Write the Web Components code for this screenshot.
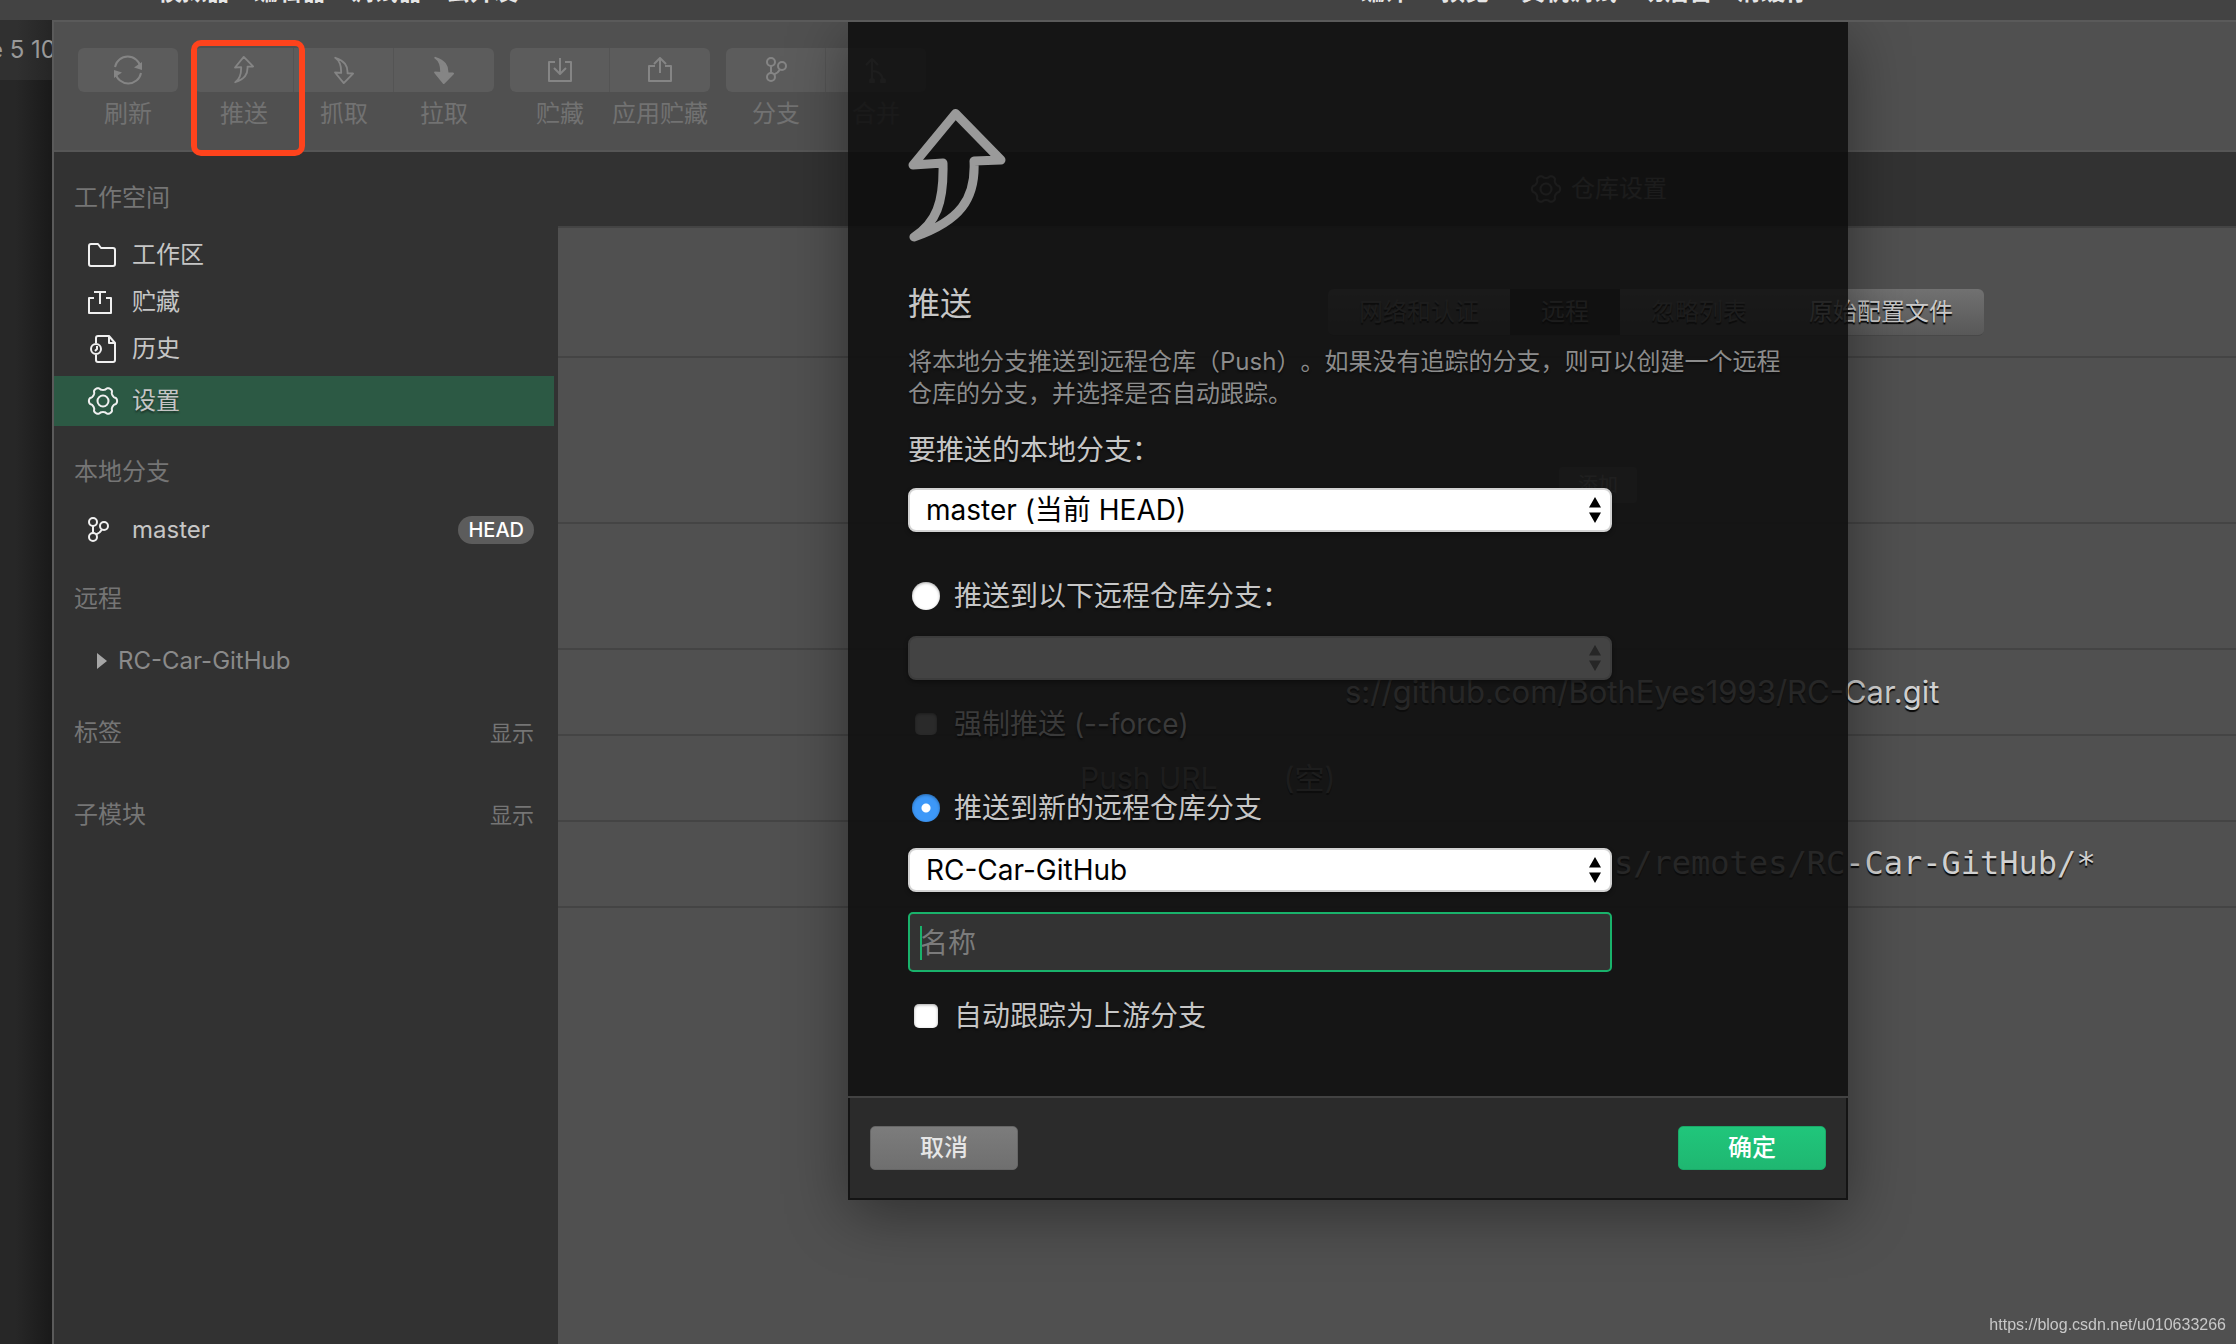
<!DOCTYPE html>
<html lang="zh-CN">
<head>
<meta charset="utf-8">
<title>推送</title>
<style>
  html, body { height: 100%; }
  body {
    margin: 0; overflow: hidden; background: #222;
    font-family: Inter, "Noto Sans CJK SC", sans-serif; font-size: 24px; line-height: 32px;
    color: #c6c6c6; text-spacing-trim: space-all;
  }
</style>
</head>
<body>
<git-app></git-app>

<script>
const define = (name, css, html, setup) => {
  const tpl = document.createElement('template');
  tpl.innerHTML = `<style>*{box-sizing:border-box}${css}</style>${html}`;
  customElements.define(name, class extends HTMLElement {
    constructor() {
      super();
      this.attachShadow({ mode: 'open' }).append(tpl.content.cloneNode(true));
    }
    connectedCallback() { if (setup) setup(this, this.shadowRoot); }
  });
};

/* Six-lobed gear outline around a centre point */
const gear = (c, r, a) => {
  let d = '';
  for (let i = 0; i < 120; i++) {
    const t = i * Math.PI / 60, w = Math.cos(6 * t);
    const k = r + a * Math.sign(w) * Math.sqrt(Math.abs(w));
    d += (i ? 'L' : 'M') + (c + k * Math.cos(t)).toFixed(2) + ' ' + (c + k * Math.sin(t)).toFixed(2);
  }
  return d + 'Z';
};
const ARROW = 'M47.5 4.5L93 51L66 52C68 90 52 112 6 128C28 114 36 94 35 54L5 56Z';
const BRANCH = '<circle cx="6" cy="5" r="4"/><circle cx="6" cy="20" r="4"/><circle cx="17" cy="9" r="4"/><path d="M6 9V16M15 12.500Q13 16 9 17.500"/>';
const ICONS = {
  refresh: [30, 30, '<path d="M2 12A13 13 0 0 1 27.500 12M28 18A13 13 0 0 1 2.500 18"/><path d="M29 7V15L21 12.500ZM1 23V15L9 17.500Z" fill="currentColor" stroke="none"/>'],
  push: [20, 28, `<g transform="scale(.205)" stroke-width="9"><path d="${ARROW}"/></g>`],
  fetch: [20, 28, `<g transform="matrix(.205 0 0 -.205 0 28)" stroke-width="9"><path d="${ARROW}"/></g>`],
  pull: [20, 28, `<g transform="matrix(.205 0 0 -.205 0 28)" stroke-width="9"><path d="${ARROW}" fill="currentColor"/></g>`],
  stash: [26, 26, '<path d="M8 5H2V24H24V5H18M13 1V17M7 11L13 17L19 11"/>'],
  apply: [26, 26, '<path d="M8 9H2V24H24V9H18M13 16V1M7 7L13 1L19 7"/>'],
  branch: [22, 26, BRANCH],
  merge: [22, 26, '<path d="M7 24V2M1 8L7 2L13 8M7 14Q17 14 18 24"/><circle cx="7" cy="24" r="2" fill="currentColor"/><circle cx="18" cy="24" r="2" fill="currentColor"/>'],
  folder: [30, 26, '<path d="M2 4Q2 2 4 2H11L14 6H26Q28 6 28 8V22Q28 24 26 24H4Q2 24 2 22Z"/>'],
  tray: [26, 26, '<path d="M7 9H2V24H24V9H19M7 3H19M13 3V15"/>'],
  history: [30, 30, '<path d="M9 9V4Q9 2 11 2H22L28 9V26Q28 28 26 28H11Q9 28 9 26V21M22 2V9H28"/><circle cx="9" cy="15" r="5"/><path d="M10 12V15L8 17"/>'],
  gear: [32, 32, `<path d="${gear(16, 12.6, 1.5)}"/><circle cx="16" cy="16" r="5.500"/>`],
  arrow: [98, 133, `<path d="${ARROW}" stroke-width="9"/>`],
  updown: [12, 26, '<path d="M6 0L12 10.500H0ZM0 15.500H12L6 26Z" fill="currentColor" stroke="none"/>'],
  right: [10, 16, '<path d="M0 0L10 8L0 16Z" fill="currentColor" stroke="none"/>']
};
const drawIcon = name => {
  const [w, h, body] = ICONS[name];
  return `<svg width="${w}" height="${h}" viewBox="0 0 ${w} ${h}" fill="none" stroke="currentColor" stroke-width="2" stroke-linejoin="round" aria-hidden="true">${body}</svg>`;
};
define('g-icon', ':host{display:inline-flex;flex:none}svg{display:block}', '<span></span>', (el, root) => {
  const name = el.getAttribute('name');
  if (name) root.querySelector('span').innerHTML = drawIcon(name);
});
/* Puts the icon named by the host's icon attribute into its [data-icon] holder */
const fillIcon = (el, root) => {
  root.querySelector('[data-icon]').innerHTML = `<g-icon name="${el.getAttribute('icon')}"></g-icon>`;
};

define('menu-strip', `
  :host{display:block;height:20px;overflow:hidden;background:#434343;color:#e6e6e6;font-weight:600}
  nav{display:flex;gap:24px;margin-top:-20px;padding-left:158px;line-height:24px}
  .pair{display:flex;gap:32px}
  .tools{display:flex;gap:24px;margin-left:819px}`, `
  <nav><span>模拟器</span><span>编辑器</span><span>调试器</span><span>云开发</span>
  <div class="tools"><div class="pair"><span>编译</span><span>预览</span><span>真机调试</span></div><span>切后台</span><span>清缓存</span></div></nav>`);

define('device-strip', `
  :host{display:flex;flex-direction:column;flex:none;width:52px;overflow:hidden;background:linear-gradient(90deg,#272727 30%,#191919)}
  div{display:flex;justify-content:flex-end;align-items:center;height:60px;margin-right:-4px;background:linear-gradient(90deg,#303030 30%,#242424);color:#999;white-space:nowrap}`,
  '<div>e 5 10</div>');

define('tool-button', `
  :host{display:block;width:100px}
  button{display:block;width:100%;padding:0;border:0;background:none;font:inherit;color:#727272;white-space:nowrap;text-align:center}
  .face{display:flex;align-items:center;justify-content:center;height:44px;background:#5c5c5c;color:#858585;margin-bottom:6px}
  :host([first]) .face{border-radius:6px 0 0 6px}
  :host([last]) .face{border-radius:0 6px 6px 0}
  :host([first][last]) .face{border-radius:6px}
  :host(:not([last])) .face{box-shadow:inset -1px 0 #545454}
  :host([marked]){position:relative;z-index:2}
  :host([marked])::after{content:"";position:absolute;inset:-8px -11px -26px -3px;border:6px solid #ff431c;border-radius:10px}`, `
  <button type="button"><span class="face" data-icon></span><slot></slot></button>`, fillIcon);

define('tool-group', ':host{display:flex;align-items:flex-start}', '<slot></slot>');

define('git-toolbar', `
  :host{display:flex;gap:16px;height:130px;padding:26px 24px 0;background:#505050;border-bottom:2px solid #565656}`, `
  <tool-group><tool-button icon="refresh" first last>刷新</tool-button></tool-group>
  <tool-group><tool-button icon="push" first marked>推送</tool-button><tool-button icon="fetch">抓取</tool-button><tool-button icon="pull" last>拉取</tool-button></tool-group>
  <tool-group><tool-button icon="stash" first>贮藏</tool-button><tool-button icon="apply" last>应用贮藏</tool-button></tool-group>
  <tool-group><tool-button icon="branch" first>分支</tool-button><tool-button icon="merge" last>合并</tool-button></tool-group>`);

define('nav-item', `
  :host{display:block;height:47px}
  a{display:grid;grid-template-columns:45px 1fr auto;align-items:center;height:100%;padding:0 24px 0 33px;color:#c6c6c6;text-decoration:none}
  [data-icon]{display:flex;color:#f0f0f0}
  :host([selected]){height:50px;margin:4px 4px 0 0;background:#2c5944}
  :host([selected]) a{text-shadow:0 2px 2px rgba(0,0,0,.4)}
  :host([child]) a{grid-template-columns:21px 1fr;padding-left:43px;color:#8a8a8a}
  :host([child]) [data-icon]{color:#a6a6a6}
  ::slotted(b){padding:0 10px;border-radius:14px;background:#5c5c5c;color:#fff;font-size:20px;font-weight:500;line-height:28px}`, `
  <a href="#"><span data-icon></span><span><slot></slot></span><slot name="badge"></slot></a>`, fillIcon);

define('nav-head', `
  :host{display:flex;justify-content:space-between;align-items:center;color:#757575}
  ::slotted(button){padding:0;border:0;background:none;font:inherit;font-size:22px;color:#757575}`,
  '<slot></slot>');

define('side-nav', `
  :host{display:flex;flex-direction:column;flex:none;width:504px;padding-top:30px;background:#323232}
  nav{display:flex;flex-direction:column}
  nav-head{padding:0 24px 0 20px}
  nav-head button{padding:0;border:0;background:none;font:inherit;font-size:22px;color:#757575}
  .a{padding-top:17px}
  .b{padding-top:30px;padding-bottom:18px}
  .c{padding-top:30px;padding-bottom:22px}
  .d{padding-top:33px;padding-bottom:50px}`, `
  <nav>
    <nav-head>工作空间</nav-head>
    <div class="a">
      <nav-item icon="folder">工作区</nav-item><nav-item icon="tray">贮藏</nav-item>
      <nav-item icon="history">历史</nav-item><nav-item icon="gear" selected>设置</nav-item>
    </div>
    <nav-head class="b">本地分支</nav-head>
    <nav-item icon="branch">master<b slot="badge">HEAD</b></nav-item>
    <nav-head class="c">远程</nav-head>
    <nav-item icon="right" child>RC-Car-GitHub</nav-item>
    <nav-head class="d">标签<button type="button">显示</button></nav-head>
    <nav-head>子模块<button type="button">显示</button></nav-head>
  </nav>`);

define('setting-row', `
  :host{display:flex;align-items:center;flex:none;height:86px;border-bottom:2px solid #444;white-space:nowrap;color:#d0d0d0;font-size:30px;text-shadow:0 2px 1px rgba(0,0,0,.9)}`,
  '<slot></slot>');

define('settings-pane', `
  :host{display:flex;flex-direction:column;flex:1;min-width:0;overflow:hidden;background:#505050}
  header{display:flex;align-items:center;gap:9px;height:76px;flex:none;padding-left:972px;background:#323232;border-bottom:2px solid #444;color:#808080}
  .tabs{height:130px;padding:40px 0 0 770px}
  .tabs div{display:flex;border-radius:6px;overflow:hidden;border-bottom:1px solid #484848}
  .tabs button{height:46px;padding:0 31px;border:0;background:linear-gradient(#717171,#585858);color:#c8c8c8;font:inherit;font-size:24px;text-shadow:0 2px 1px #000}
  .tabs button.on{background:#2c2c2c}
  .tabs button.dim{color:#868686}
  .add{height:166px;padding:90px 0 0 1001px}
  .add button{height:36px;padding:0 19px;border:0;border-radius:4px;background:#626262;color:#999;font:inherit;font-size:20px}
  .blank{height:126px}
  .url{padding-left:787px;font-size:31px}
  .push{padding-left:522px;gap:66px;color:#8a8a8a}
  .ref{padding:0 0 3px 1056px;font-family:"DejaVu Sans Mono",monospace;font-size:32px}`, `
  <header><g-icon name="gear"></g-icon>仓库设置</header>
  <setting-row class="tabs"><div><button type="button" class="dim">网络和认证</button><button type="button" class="on dim">远程</button><button type="button" class="dim">忽略列表</button><button type="button">原始配置文件</button></div></setting-row>
  <setting-row class="add"><button type="button">添加</button></setting-row>
  <setting-row class="blank"></setting-row>
  <setting-row class="url">s://github.com/BothEyes1993/RC-Car.git</setting-row>
  <setting-row class="push"><span>Push URL</span><span>(空)</span></setting-row>
  <setting-row class="ref">s/remotes/RC-Car-GitHub/*</setting-row>`);

define('push-dialog', `
  :host{display:flex;flex-direction:column;width:1000px;color:#c6c6c6;background:rgba(13,13,13,.867);box-shadow:0 14px 56px rgba(0,0,0,.4);text-shadow:0 2px 2px rgba(0,0,0,.5)}
  form{display:flex;flex-direction:column;align-items:flex-start;padding:87px 60px 60px}
  g-icon.big{color:#9a9a9a}
  h1{margin:42px 0 0;font-size:32px;font-weight:400;line-height:40px}
  p{margin:22px 0 0;max-width:880px;color:#8c8c8c;line-height:32px}
  label{font-size:28px;line-height:40px}
  .lead{margin-top:20px}
  .pick{display:grid;align-items:center;width:704px;color:#000}
  .pick>*{grid-area:1/1}
  .pick g-icon{justify-self:end;margin-right:11px;pointer-events:none}
  select{appearance:none;width:100%;height:44px;margin:0;padding:0 14px 0 16px;border:2px solid #d2d2d2;border-radius:8px;background:#fff;color:#000;font:inherit;font-size:28px;line-height:36px;text-shadow:none;box-shadow:0 2px 4px rgba(0,0,0,.4)}
  select:disabled{background:#434343;border-color:#3c3c3c;opacity:1}
  .pick.off{color:#262626}
  .choice{display:grid;grid-template-columns:46px 1fr;align-items:center}
  .off.choice{color:#3a3a3a}
  input[type=radio],input[type=checkbox]{appearance:none;margin:0 0 0 4px;width:28px;height:28px;border-radius:50%;background:#fff;box-shadow:inset 0 1px 3px rgba(0,0,0,.35)}
  input[type=radio]:checked{background:radial-gradient(circle,#fff 4px,#3d98f8 5px)}
  input[type=checkbox]{width:24px;height:24px;margin-left:6px;border-radius:5px}
  input[type=checkbox]:disabled{background:#2a2a2a;width:22px;height:22px;margin-left:7px}
  .text{width:704px;height:60px;margin:20px 0 0;padding:2px 10px 0;border:2px solid #19b26b;border-radius:5px;outline:0;color:#ddd;font:inherit;font-size:28px;
    background:linear-gradient(#19b26b,#19b26b) 10px 12px/2px 34px no-repeat #333;text-shadow:none}
  .text::placeholder{color:#7b7b7b;opacity:1}
  footer{display:flex;justify-content:space-between;padding:28px 20px 28px;background:#2b2b2b;border:solid #141414;border-width:0 2px 2px}
  .rule{height:2px;background:#424242}
  footer button{width:148px;height:44px;padding:0;border:1px solid #666;border-radius:5px;background:linear-gradient(#7c7c7c,#6f6f6f);color:#e6e6e6;font:inherit;font-weight:500;text-shadow:none}
  footer button.ok{background:linear-gradient(#20c67b,#1fb771);border-color:#1ba968;color:#fff}
  .g1{margin-top:18px}.g2{margin-top:44px}.g3{margin-top:20px}.g4{margin-top:24px}`, `
  <form>
    <g-icon class="big" name="arrow"></g-icon>
    <h1>推送</h1>
    <p>将本地分支推送到远程仓库（Push）。如果没有追踪的分支，则可以创建一个远程仓库的分支，并选择是否自动跟踪。</p>
    <label class="lead" for="local">要推送的本地分支：</label>
    <div class="pick g1"><select id="local"><option>master (当前 HEAD)</option></select><g-icon name="updown"></g-icon></div>
    <label class="choice g2"><input type="radio" name="to">推送到以下远程仓库分支：</label>
    <div class="pick off g3"><select disabled aria-label="远程仓库分支"><option></option></select><g-icon name="updown"></g-icon></div>
    <label class="choice off g4"><input type="checkbox" disabled>强制推送 (--force)</label>
    <label class="choice g2"><input type="radio" name="to" checked>推送到新的远程仓库分支</label>
    <div class="pick g3"><select aria-label="远程仓库"><option>RC-Car-GitHub</option></select><g-icon name="updown"></g-icon></div>
    <input class="text" type="text" placeholder="名称" aria-label="名称">
    <label class="choice g4"><input type="checkbox">自动跟踪为上游分支</label>
  </form>
  <div class="rule"></div>
  <footer><button type="button">取消</button><button type="button" class="ok">确定</button></footer>`);

define('git-app', `
  :host{display:flex;flex-direction:column;height:100vh}
  .row{display:flex;flex:1;min-height:0}
  .win{position:relative;display:flex;flex-direction:column;flex:1;min-width:0;overflow:hidden;border:solid #5a5a5a;border-width:2px 0 0 2px}
  .body{display:flex;flex:1;min-height:0}
  push-dialog{position:absolute;top:0;left:794px;z-index:3}
  .mark{position:fixed;right:10px;bottom:9px;font:16px/20px "Liberation Sans",sans-serif;color:#c8c8c8}`, `
  <menu-strip></menu-strip>
  <div class="row">
    <device-strip></device-strip>
    <div class="win">
      <git-toolbar></git-toolbar>
      <div class="body"><side-nav></side-nav><settings-pane></settings-pane></div>
      <push-dialog role="dialog" aria-label="推送"></push-dialog>
    </div>
  </div>
  <span class="mark">https://blog.csdn.net/u010633266</span>`);
</script>
</body>
</html>
